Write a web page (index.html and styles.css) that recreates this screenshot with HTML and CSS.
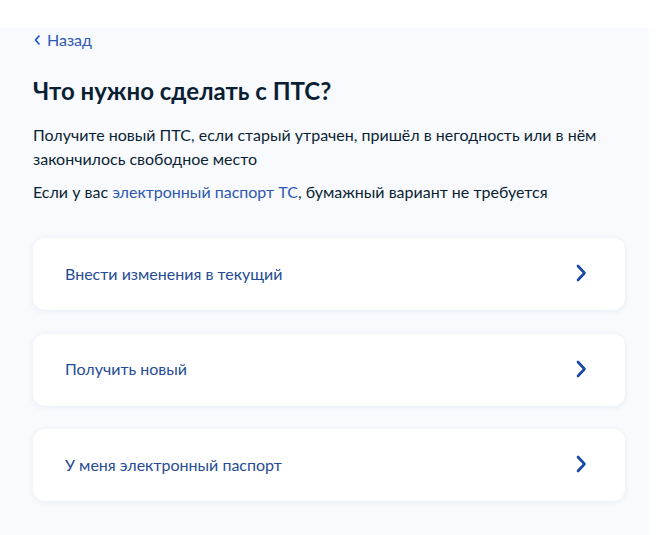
FILE: index.html
```html
<!DOCTYPE html>
<html lang="ru">
<head>
<meta charset="utf-8">
<link rel="stylesheet" href="styles.css">
</head>
<body>
<div class="top"></div>
<main class="page">
  <a class="back" href="#">
    <svg class="back-ico" width="8" height="10" viewBox="0 0 8 10"><path d="M6 1 L2.5 5 L6 9" fill="none" stroke="#0d4cd3" stroke-width="1.6" stroke-linecap="round" stroke-linejoin="round"/></svg>
    <span>Назад</span>
  </a>
  <h1 class="title">Что нужно сделать с ПТС?</h1>
  <p class="text">Получите новый ПТС, если старый утрачен, пришёл в негодность или в нём закончилось свободное место</p>
  <p class="text">Если у вас <a class="link" href="#">электронный паспорт ТС</a>, бумажный вариант не требуется</p>
  <div class="cards">
    <a class="card" href="#"><span>Внести изменения в текущий</span><svg class="chev" width="12" height="18" viewBox="0 0 12 18"><path d="M3 2 L9.5 9 L3 16" fill="none" stroke="#1a45a8" stroke-width="2.6" stroke-linecap="round" stroke-linejoin="round"/></svg></a>
    <a class="card" href="#"><span>Получить новый</span><svg class="chev" width="12" height="18" viewBox="0 0 12 18"><path d="M3 2 L9.5 9 L3 16" fill="none" stroke="#1a45a8" stroke-width="2.6" stroke-linecap="round" stroke-linejoin="round"/></svg></a>
    <a class="card" href="#"><span>У меня электронный паспорт</span><svg class="chev" width="12" height="18" viewBox="0 0 12 18"><path d="M3 2 L9.5 9 L3 16" fill="none" stroke="#1a45a8" stroke-width="2.6" stroke-linecap="round" stroke-linejoin="round"/></svg></a>
  </div>
</main>
</body>
</html>
```
FILE: styles.css
```css
html, body {
  margin: 0;
  padding: 0;
  background: #ffffff;
  font-family: Lato, "Noto Sans", sans-serif;
  color: #0b1f33;
}
.top {
  height: 28px;
  background: #ffffff;
}
.page {
  width: 649px;
  box-sizing: border-box;
  background: #f8fafd;
  padding: 2px 24px 40px 33px;
  min-height: 507px;
}
.back {
  display: flex;
  align-items: center;
  gap: 6px;
  text-decoration: none;
  color: #2d57b0;
  font-size: 16px;
  line-height: 20px;
}
.title {
  margin: 26px 0 0;
  font-size: 24px;
  font-weight: 700;
  line-height: 30px;
  color: #0b1f33;
}
.text {
  margin: 17px 0 0;
  font-size: 16px;
  line-height: 24px;
}
.text + .text {
  margin-top: 9px;
}
.link {
  color: #2d57b0;
  text-decoration: none;
}
.cards {
  margin-top: 34px;
  display: flex;
  flex-direction: column;
  gap: 23.5px;
}
.card {
  display: flex;
  align-items: center;
  justify-content: space-between;
  height: 72px;
  box-sizing: border-box;
  padding: 0 38px 2px 32px;
  background: #ffffff;
  border-radius: 12px;
  box-shadow: 0 1px 6px rgba(40, 70, 120, 0.08);
  text-decoration: none;
  color: #264c96;
  font-size: 16px;
}
```
